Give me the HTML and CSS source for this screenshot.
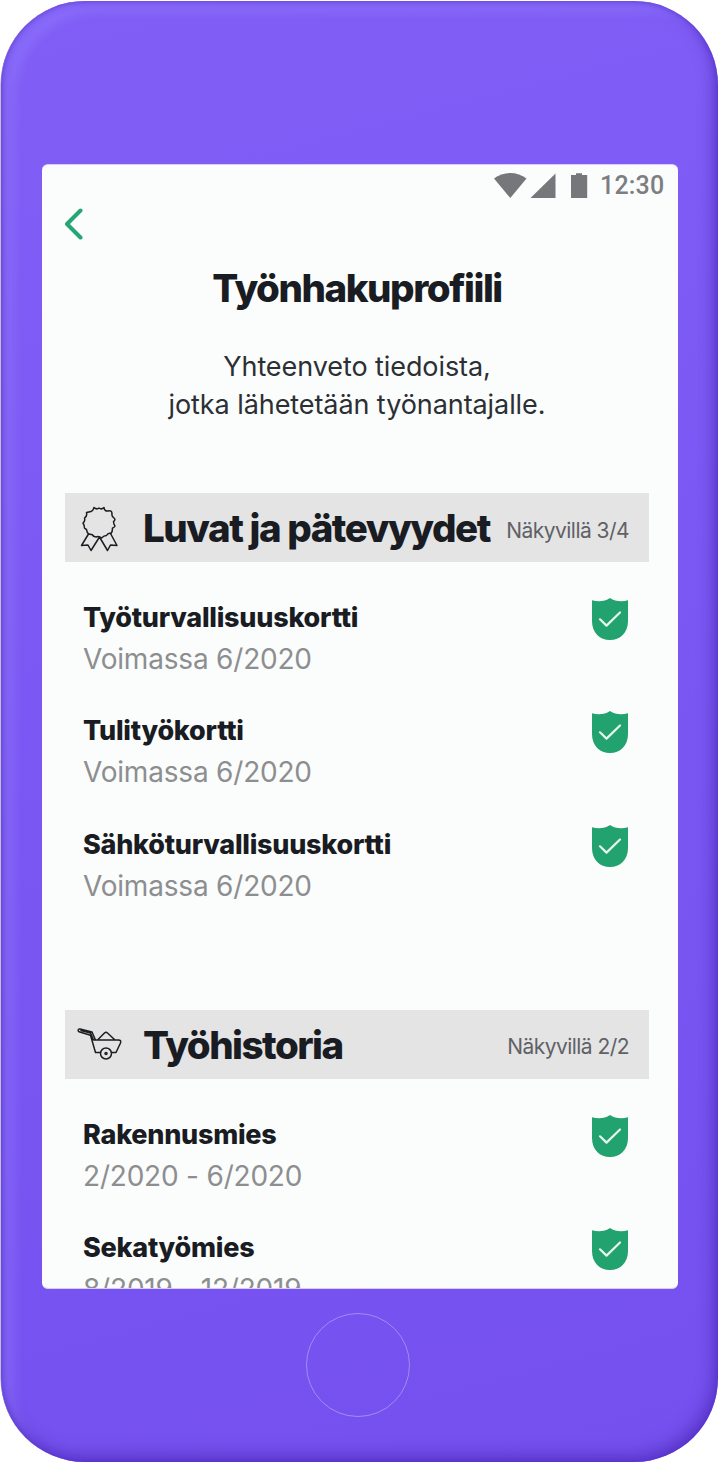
FILE: index.html
```html
<!DOCTYPE html>
<html lang="fi">
<head>
<meta charset="utf-8">
<title>Työnhakuprofiili</title>
<link rel="stylesheet" href="styles.css">
</head>
<body>
<svg class="defs" width="0" height="0" aria-hidden="true">
  <symbol id="shield" viewBox="0 0 38 44">
    <path fill="#22a26f" d="M1 3.2C7 4.8 14 4.500 19 1C24 4.500 31 4.800 37 3.200V24C37 36 29 43 19 43S1 36 1 24Z"/>
    <path fill="none" stroke="#e6f6ef" stroke-width="2.2" stroke-linecap="round" stroke-linejoin="round" d="M9 22.300L15.500 28.600L29 15.500"/>
  </symbol>
</svg>
<div class="phone">
  <main class="screen">
    <div class="status">
      <svg class="status-icons" viewBox="0 0 96 28" fill="#76777b">
        <path d="M0 6.500C9 -1 23.500 -1 32.500 6.500L16.300 26Z"/>
        <path d="M36.500 26H61.500V1.500Z"/>
        <path d="M77 3H82V1.200H88V3H93.200V26H77Z"/>
      </svg>
      <span class="clock">12:30</span>
    </div>
    <svg class="back" viewBox="0 0 20 32"><path d="M16.500 2.500L3 16L16.500 29.500"/></svg>
    <h1 class="title">Työnhakuprofiili</h1>
    <p class="intro">Yhteenveto tiedoista,<br>jotka lähetetään työnantajalle.</p>

    <section class="section">
      <header class="bar">
        <svg class="bar-icon" viewBox="0 0 48 48">
          <path d="M19 3.500Q21.500 6 24 4Q26.500 6 29 3.500Q29.500 7.500 33 7Q37 6 37 9.500Q36.300 12 39 14Q41 15.500 38.500 17.500Q38.500 20 40 22Q39 24 37.500 24Q37.500 28 36 29.500Q33 28.500 31.500 31.500Q29 31.500 26.500 34Q23.500 31.500 21 33Q18.500 33 17 30.500Q13.500 31 12 28Q12.500 25.500 9.500 24Q9.500 21.500 8 19Q10.500 17 9.500 14Q12.500 12 11.500 8.500Q14 8 16 7.500Q18 7 19 3.500Z"/>
          <path d="M13.500 30L6.500 41.500L13 41L16 46.500L24.500 33L32.500 46.500L35.500 41L42 41.500L35.500 29.500"/>
        </svg>
        <h2 class="bar-title bar-title-long">Luvat ja pätevyydet</h2>
        <span class="bar-count">Näkyvillä 3/4</span>
      </header>
      <ul class="list">
        <li class="item"><div><div class="name">Työturvallisuuskortti</div><div class="date">Voimassa 6/2020</div></div><svg class="shield"><use href="#shield"/></svg></li>
        <li class="item"><div><div class="name">Tulityökortti</div><div class="date">Voimassa 6/2020</div></div><svg class="shield"><use href="#shield"/></svg></li>
        <li class="item"><div><div class="name">Sähköturvallisuuskortti</div><div class="date">Voimassa 6/2020</div></div><svg class="shield"><use href="#shield"/></svg></li>
      </ul>
    </section>

    <section class="section">
      <header class="bar">
        <svg class="bar-icon" viewBox="0 0 48 48">
          <path d="M4 11.800C2.500 11 3 8.500 5 9L17 12L20.500 20H43.500Q46.500 20 45.500 23L41 32.500H36.500M25.500 32.500H20.500L15.500 15.200L4 11.800M6 10.500L15.500 13L18.500 20H20.500M23 19.500L29.500 13Q31 11.500 32.500 13L39.500 19.500"/>
          <circle cx="31" cy="33.500" r="5.500"/>
          <circle cx="31" cy="33.500" r="1"/>
        </svg>
        <h2 class="bar-title">Työhistoria</h2>
        <span class="bar-count">Näkyvillä 2/2</span>
      </header>
      <ul class="list">
        <li class="item"><div><div class="name">Rakennusmies</div><div class="date">2/2020 - 6/2020</div></div><svg class="shield"><use href="#shield"/></svg></li>
        <li class="item"><div><div class="name">Sekatyömies</div><div class="date">8/2019 - 12/2019</div></div><svg class="shield"><use href="#shield"/></svg></li>
      </ul>
    </section>
  </main>
  <div class="home"></div>
</div>
</body>
</html>
```
FILE: styles.css
```css
* { box-sizing: border-box; }
body { margin: 0; background: #fff; font-family: Inter, "Liberation Sans", sans-serif; color: #191c22; }
h1, h2, p, ul { margin: 0; padding: 0; }
svg { display: block; flex: none; }
.defs { position: absolute; }
.phone {
  width: 717px; height: 1461px; margin: 1px 0 0 1px; padding: 163px 0 0 41px;
  display: flex; flex-direction: column; align-items: flex-start;
  border-radius: 84px; overflow: hidden;
  background: linear-gradient(165deg, #815ff6 0%, #7a57f3 50%, #7550ef 100%);
  box-shadow: -1px 0 0 -0.5px #8580a0,
    inset 0 0 6px rgba(76, 38, 210, .7),
    inset -5px -8px 15px rgba(70, 35, 170, .5),
    inset 14px 12px 9px rgba(151, 132, 255, .33);
}
.screen {
  width: 636px; height: 1125px; flex: none; overflow: hidden;
  padding: 0 29px 0 23px;
  border-radius: 6px; background: #fbfcfc; border: 0 solid #d6cdfb;
  border-width: 1px 0;
}
.status { height: 42px; display: flex; align-items: center; justify-content: flex-end; margin-right: -14px; }
.status-icons { width: 96px; height: 28px; margin-right: 10px; }
.clock { width: 63px; font: 500 25px/42px Roboto, sans-serif; color: #7d7e81; letter-spacing: .2px; white-space: nowrap; }
.back { width: 20px; height: 32px; margin: 1px 0 0 -1px; fill: none; stroke: #27a675; stroke-width: 4; stroke-linecap: round; stroke-linejoin: round; }
.title { height: 50px; margin-top: 23px; font-size: 38.500px; line-height: 50px; font-weight: 800; text-align: center; white-space: nowrap; letter-spacing: -1.450px; }
.intro { height: 75px; margin-top: 35px; font-size: 27px; line-height: 37.500px; text-align: center; white-space: nowrap; color: #2c2f34; letter-spacing: -.08px; }
.bar { display: flex; align-items: center; height: 69px; padding: 0 20px 0 11px; background: #e4e4e5; }
.section { padding-top: 70px; }
.section + .section { padding-top: 104px; }
.bar-icon { width: 48px; height: 48px; margin-left: -1px; margin-right: 1px; fill: none; stroke: #1b1d20; stroke-width: 1.500; stroke-linejoin: round; stroke-linecap: round; }
.bar-title { margin-left: 19px; padding-top: 1px; font-size: 38.500px; line-height: 68px; font-weight: 800; white-space: nowrap; letter-spacing: -1.500px; }
.bar-title-long { letter-spacing: -1.450px; }
.bar-count { margin-left: auto; padding-top: 5px; font-size: 21px; white-space: nowrap; color: #606165; letter-spacing: -.55px; }
.list { list-style: none; padding: 36px 20px 0 18px; display: grid; gap: 32.300px; }
.item { display: flex; justify-content: space-between; height: 81px; }
.name { font-size: 27px; line-height: 40px; height: 40px; font-weight: 800; white-space: nowrap; letter-spacing: -.25px; }
.date { font-size: 28px; line-height: 42px; white-space: nowrap; color: #8d8e90; font-weight: 400; letter-spacing: -.2px; }
.shield { width: 38px; height: 44px; margin: -1px 0 0; }
.home { width: 104px; height: 104px; flex: none; margin: 24px 0 0 264px; border: 1px solid #a18cf5; border-radius: 50%; }
```
